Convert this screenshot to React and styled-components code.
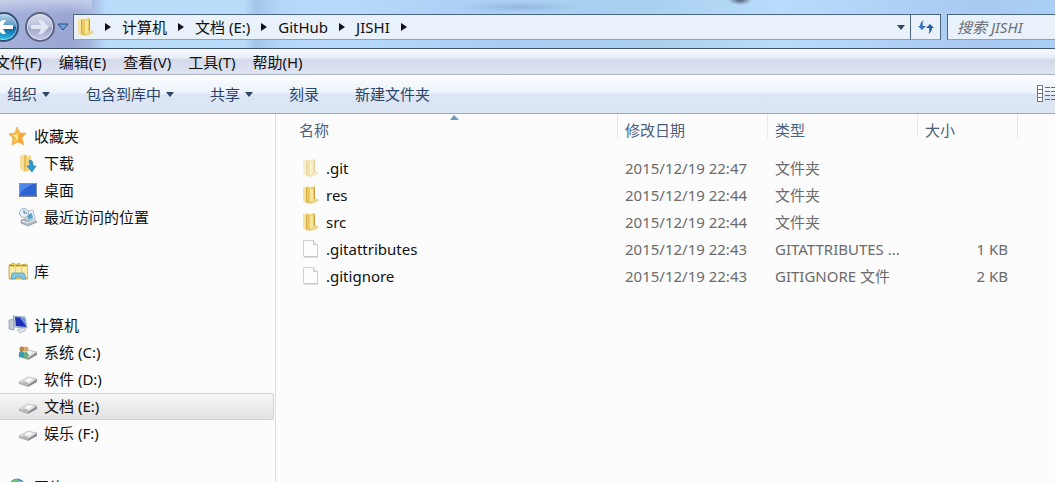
import React from 'react'
import styled, { createGlobalStyle } from 'styled-components';

const GlobalStyle = createGlobalStyle`
  * {
    box-sizing: border-box;
  }
  html, body, #root {
    height: 100%;
  }
  body {
    margin: 0;
    overflow: hidden;
  }
  body, button, input {
    font-family: "Noto Sans", "Noto Sans CJK SC", sans-serif;
    font-size: 15px;
    line-height: 20px;
  }
  button {
    border: 0;
    padding: 0;
    background: none;
    color: inherit;
    white-space: nowrap;
  }
`;

const Window = styled.div`
  height: 100%;
  display: flex;
  flex-direction: column;
  overflow: hidden;
  background: #fcfcfd;
  color: #101010;
`;

const Glass = styled.header`
  flex: none;
  display: flex;
  align-items: flex-start;
  height: 49px;
  padding-top: 14px;
  border-bottom: 1px solid #3d5570;
  background:
    radial-gradient(ellipse 12px 5px at 740px 0, #4c5c78, rgba(76, 92, 120, 0)),
    radial-gradient(ellipse 64px 5px at 520px 7px, rgba(116, 150, 190, 0.4), rgba(116, 150, 190, 0)),
    linear-gradient(180deg, rgba(220, 228, 244, 0.6) 0, rgba(220, 228, 244, 0) 14px) 0 0 / 92px 14px no-repeat,
    linear-gradient(90deg, #a6b1da 0, #9ba5d2 70px, #a4b4de 90px, #b9dcfb 106px, #b9dcfb 244px, #a3c6ea 256px, #b4d8f8 282px, #b8dafa 340px, #a9cef3 500px, #aad2ef 660px, #b9dcfb 780px, #a9c9f2 980px, #a9d0f5 100%);
`;

const NavButtons = styled.div`
  flex: none;
  display: flex;
  align-items: center;
  gap: 6px;
  height: 26px;
  margin-left: -11px;
`;

const RoundButton = styled.button`
  width: 30px;
  height: 30px;
  border-radius: 50%;
  border: 2px solid ${({ $active }) => ($active ? '#33507c' : '#5d6484')};
  display: flex;
  align-items: center;
  justify-content: center;
  background: ${({ $active }) => ($active
    ? 'linear-gradient(180deg, #b4d4ea 0, #4f93c4 48%, #0f5c99 52%, #2fc0ea 100%)'
    : 'linear-gradient(180deg, #d6daea 0, #b9c0dc 48%, #a0a8cc 52%, #c3cae4 100%)')};
  box-shadow: inset 0 0 0 1px rgba(255, 255, 255, 0.5);
  svg {
    flex: none;
  }
`;

const HistoryButton = styled.button`
  display: flex;
  margin: 0 4px 0 -4px;
`;

const AddressBar = styled.div`
  flex: 1;
  display: flex;
  align-items: center;
  height: 26px;
  padding-left: 3px;
  border: 1px solid #4c6784;
  border-bottom-color: #8aa4c0;
  background: #e9f1fb;
`;

const Crumbs = styled.nav`
  flex: 1;
  display: flex;
  align-items: center;
  gap: 11px;
`;

const Triangle = styled.span`
  border: 4px solid transparent;
  ${({ $right }) => ($right
    ? 'border-left: 6px solid #101018; border-right: 0;'
    : 'border-top: 5px solid #2c4468; border-bottom: 0;')}
`;

const DropButton = styled.button`
  display: flex;
  padding: 0 5px;
`;

const RefreshButton = styled.button`
  flex: none;
  display: flex;
  align-items: center;
  justify-content: center;
  width: 30px;
  height: 26px;
  border: 1px solid #4c6784;
  border-left: 0;
  border-bottom-color: #8aa4c0;
  background: #e9f1fb;
`;

const SearchBox = styled.input`
  flex: none;
  width: 120px;
  height: 26px;
  margin: 0 -12px 0 6px;
  padding: 0 9px;
  border: 1px solid #4c6784;
  border-bottom-color: #8aa4c0;
  border-radius: 0;
  background: #e9f1fb;
  font-style: italic;
  outline: 0;
  &::placeholder {
    color: #6b7078;
    opacity: 1;
  }
`;

const MenuBar = styled.nav`
  flex: none;
  display: flex;
  align-items: center;
  gap: 17px;
  height: 26px;
  margin-left: -5px;
  border-bottom: 1px solid #aab4c8;
  background: linear-gradient(180deg, #f8fafe 0, #e8edf8 9px, #d4daea 10px, #dfe3f2 100%);
`;

const Toolbar = styled.div`
  flex: none;
  display: flex;
  align-items: center;
  gap: 36px;
  height: 39px;
  padding-left: 7px;
  border-bottom: 1px solid #93a9c4;
  background: linear-gradient(180deg, #fbfdff 0, #edf3fc 18px, #dde6f4 19px, #dce5f4 100%);
  color: #2a4468;
`;

const ToolButton = styled.button`
  display: flex;
  align-items: center;
  gap: 5px;
`;

const ViewButton = styled.button`
  display: flex;
  margin-left: auto;
  margin-right: -8px;
`;

const Body = styled.div`
  flex: 1;
  min-height: 0;
  display: flex;
  overflow: hidden;
`;

const Sidebar = styled.aside`
  flex: none;
  width: 276px;
  padding: 9px 1px 0 0;
  border-right: 1px solid #d6dfec;
  display: flex;
  flex-direction: column;
  gap: 27px;
`;

const NavGroup = styled.ul`
  margin: 0;
  padding: 0;
  list-style: none;
`;

const NavLink = styled.a`
  display: flex;
  align-items: center;
  gap: 6px;
  height: 27px;
  padding: 0 0 2px ${({ $nested }) => ($nested ? '18px' : '8px')};
  border: 1px solid ${({ $selected }) => ($selected ? '#d4d4d4' : 'transparent')};
  border-left: 0;
  border-radius: 0 3px 3px 0;
  background: ${({ $selected }) => ($selected ? 'linear-gradient(180deg, #f6f6f6, #e2e2e2)' : 'none')};
  color: inherit;
  text-decoration: none;
  svg {
    flex: none;
  }
`;

const Content = styled.main`
  flex: 1;
  min-width: 0;
`;

const FileTable = styled.table`
  width: 100%;
  table-layout: fixed;
  border-collapse: collapse;
  color: #6b6b6b;
`;

const HeadCell = styled.th`
  width: ${({ $width }) => $width};
  height: 40px;
  padding: 0;
  vertical-align: top;
  text-align: left;
  font-weight: 400;
  color: #4c607a;
`;

const HeadLabel = styled.div`
  position: relative;
  height: 24px;
  padding: 6px 0 0 ${({ $indent }) => $indent};
  border-right: 1px solid #e3e9f1;
`;

const SortMark = styled.svg`
  position: absolute;
  top: 1px;
  left: 51%;
`;

const Cell = styled.td`
  height: 27px;
  padding: 0 10px 0 7px;
  text-align: ${({ $align }) => $align || 'left'};
  white-space: nowrap;
  overflow: hidden;
  text-overflow: ellipsis;
`;

const FileName = styled.div`
  display: flex;
  align-items: center;
  gap: 7px;
  padding-left: 19px;
  color: #101010;
`;

const FolderIcon = ({ faded }) => (
  <svg width="17" height="20" viewBox="0 0 17 20" opacity={faded ? 0.5 : 1}>
    <path d="M1 2l5-1 1 2v15l-2 1-4-3z" fill="#f6e4a4" />
    <path d="M4 3l3-1v16l-3-1z" fill="#d3a944" />
    <path d="M5 3l2-1v15l-2-1z" fill="#ecc965" />
    <path d="M7 3l5-2 1 1v15l-6 2z" fill="#ecca5c" />
    <path d="M8 4l3-1v13l-3 1z" fill="#f9e799" />
    <path d="M12 3l1-1v12l-1 1z" fill="#c79c38" />
    <path d="M10 15l4-2 3 2-2 2-6 2z" fill="#e9d590" />
  </svg>
);

const FileIcon = () => (
  <svg width="17" height="20" viewBox="0 0 17 20">
    <path d="M1.500 1.500h10l4 4v12h-14z" fill="#fdfdfd" stroke="#d2d2d2" />
    <path d="M11.500 1.500v4h4" fill="#eee" stroke="#c8c8c8" />
    <path d="M2 18h14" stroke="#bdbdbd" />
  </svg>
);

const StarIcon = () => (
  <svg width="20" height="20" viewBox="0 0 20 20">
    <path d="M9 1l3 6 6 0-4 5 2 7-6-3-6 3 1-7-4-4 6-1z" fill="#f6b83c" stroke="#e8a850" strokeWidth=".7" />
    <path d="M9 3l1 5-6 1 4 3-1 4 3-3z" fill="#fde58d" />
    <path d="M12 8l5 0-4 4 2 6-5-4z" fill="#f19c3c" opacity=".7" />
  </svg>
);

const DownloadIcon = () => (
  <svg width="20" height="20" viewBox="0 0 20 20">
    <path d="M2 3l5-2 2 2v15l-3 1-4-3z" fill="#f4dfa0" />
    <path d="M6 3l3-1v15l-3 1z" fill="#e3bb58" />
    <path d="M8 4l5-2v15l-5 2z" fill="#f1d583" />
    <path d="M12 7q3 0 3 6h3l-4 6-5-6h3q0-3-1-5z" fill="#2f9bd4" stroke="#2674ae" strokeWidth=".7" />
  </svg>
);

const DesktopIcon = () => (
  <svg width="20" height="20" viewBox="0 0 20 20">
    <rect x="1.500" y="3.500" width="17" height="12" fill="#2c62d2" stroke="#7e93b4" />
    <path d="M2 4h14q-10 3-14 10z" fill="#4f88e6" />
    <path d="M1 16h18" stroke="#50607c" strokeWidth="1.500" />
  </svg>
);

const RecentIcon = () => (
  <svg width="20" height="20" viewBox="0 0 20 20">
    <path d="M3 13l11-3 5 5-9 4-7-3z" fill="#aeb7c1" stroke="#8594a4" strokeWidth=".7" />
    <path d="M6 5l9-2 2 9-8 2z" fill="#eef6fb" stroke="#9db0c3" strokeWidth=".8" />
    <path d="M9 8l5-2 1 5-5 2z" fill="#5aa3c8" />
    <circle cx="6" cy="6" r="4.500" fill="#e6f0f8" stroke="#9fb8cc" />
    <path d="M6 3v3h3" fill="none" stroke="#55779a" />
    <path d="M4 14l6 2 7-3" fill="none" stroke="#f2f5f8" />
  </svg>
);

const LibraryIcon = () => (
  <svg width="20" height="20" viewBox="0 0 20 20">
    <path d="M1 4l5-2 2 2 3-2 2 2 5-1 2 2v13H1z" fill="#edcf6a" stroke="#b79a3e" strokeWidth=".7" />
    <path d="M2 6h5v10H2zM8 6h5v10H8zM14 6h5v10h-5z" fill="#faeea9" />
    <path d="M2 4.500h4M8 4.500h4M14 4.500h4" stroke="#70963f" />
    <path d="M3 18l1-6h12l2 6h-4l-1-2H8l-1 2z" fill="#82c5e4" stroke="#4f93b9" strokeWidth=".7" />
  </svg>
);

const ComputerIcon = () => (
  <svg width="20" height="20" viewBox="0 0 20 20">
    <path d="M1 5l5-1v11l-5-1z" fill="#c3c9d4" stroke="#8a92a4" strokeWidth=".7" />
    <path d="M5 1l12 1 2 11-12-1z" fill="#bccde2" stroke="#7d8fae" strokeWidth=".7" />
    <path d="M7 2l9 1 2 9-10-1z" fill="#1a2fb4" />
    <path d="M12 3l4 0 2 8z" fill="#6f93ea" />
    <path d="M9 15l6-2 3 2-6 3z" fill="#dfe3ea" stroke="#a6aebc" strokeWidth=".7" />
  </svg>
);

const DriveShape = () => (
  <>
    <path d="M1 13l9-5 9 2-9 6z" fill="#dfe0e2" stroke="#b4b6ba" strokeWidth=".7" />
    <path d="M1 13l9 3v2l-9-3z" fill="#b0b2b6" />
    <path d="M10 16l9-6v3l-9 5z" fill="#8a8c90" />
    <path d="M7 11l4-2 4 1-4 3z" fill="#f8f8f8" />
    <path d="M5 13l5 2" stroke="#9a9ca0" />
  </>
);

const DriveIcon = () => (
  <svg width="20" height="20" viewBox="0 0 20 20"><DriveShape /></svg>
);

const SystemDriveIcon = () => (
  <svg width="20" height="20" viewBox="0 0 20 20">
    <DriveShape />
    <circle cx="4" cy="7" r="2.500" fill="#b88547" />
    <circle cx="8" cy="7" r="2.500" fill="#d8a669" />
    <path d="M1 15q-1-7 3-6l3 2v5z" fill="#3f9cb0" />
    <path d="M6 16q-1-7 3-6l2 3-2 4z" fill="#6ab07e" />
  </svg>
);

const NetworkIcon = () => (
  <svg width="20" height="20" viewBox="0 0 20 20">
    <circle cx="9" cy="10" r="8" fill="#3a8fc9" stroke="#2c6fa0" strokeWidth=".7" />
    <path d="M3 5q4-5 8-2l-2 5-5 2z" fill="#6dc07a" />
    <path d="M11 4l4 1 1 4-4 1z" fill="#c7e4f5" />
  </svg>
);

const RefreshIcon = () => (
  <svg width="18" height="18" viewBox="0 0 18 18">
    <path d="M7 2q-2 2-1 6h3l-4 4-4-4h2q0-4 4-6z" fill="#3577c4" />
    <path d="M11 16q2-2 1-6H9l4-4 4 4h-2q0 4-4 6z" fill="#2a5fa8" />
  </svg>
);

const ViewIcon = () => (
  <svg width="26" height="18" viewBox="0 0 26 18" shapeRendering="crispEdges">
    <rect x="0.500" y="0.500" width="5" height="16" fill="#fff" stroke="#6f7886" />
    <path d="M1 4.500h5M1 8.500h5M1 12.500h5" stroke="#6f7886" />
    <path d="M8 2.500h18M8 6.500h18M8 10.500h18M8 14.500h18" stroke="#5f6b7d" strokeDasharray="5 1" />
  </svg>
);

const RoundArrow = ({ flip }) => (
  <svg width="20" height="18" viewBox="0 0 20 18">
    <path
      d="M1 7h10L8 2h4l7 7-7 7H8l3-5H1z"
      fill={flip ? '#fff' : '#e2e6f3'}
      transform={flip ? 'rotate(180 10 9)' : undefined}
    />
  </svg>
);

const crumbs = ['计算机', '文档 (E:)', 'GitHub', 'JISHI'];

const menus = ['文件(F)', '编辑(E)', '查看(V)', '工具(T)', '帮助(H)'];

const tools = [
  { label: '组织', menu: true },
  { label: '包含到库中', menu: true },
  { label: '共享', menu: true },
  { label: '刻录' },
  { label: '新建文件夹' },
];

const places = [
  [
    { label: '收藏夹', Icon: StarIcon },
    { label: '下载', Icon: DownloadIcon, nested: true },
    { label: '桌面', Icon: DesktopIcon, nested: true },
    { label: '最近访问的位置', Icon: RecentIcon, nested: true },
  ],
  [{ label: '库', Icon: LibraryIcon }],
  [
    { label: '计算机', Icon: ComputerIcon },
    { label: '系统 (C:)', Icon: SystemDriveIcon, nested: true },
    { label: '软件 (D:)', Icon: DriveIcon, nested: true },
    { label: '文档 (E:)', Icon: DriveIcon, nested: true, selected: true },
    { label: '娱乐 (F:)', Icon: DriveIcon, nested: true },
  ],
  [{ label: '网络', Icon: NetworkIcon }],
];

const files = [
  { name: '.git', date: '2015/12/19 22:47', type: '文件夹', folder: true, hidden: true },
  { name: 'res', date: '2015/12/19 22:44', type: '文件夹', folder: true },
  { name: 'src', date: '2015/12/19 22:44', type: '文件夹', folder: true },
  { name: '.gitattributes', date: '2015/12/19 22:43', type: 'GITATTRIBUTES ...', size: '1 KB' },
  { name: '.gitignore', date: '2015/12/19 22:43', type: 'GITIGNORE 文件', size: '2 KB' },
];

const AddressRow = () => (
  <Glass>
    <NavButtons>
      <RoundButton $active aria-label="后退"><RoundArrow flip /></RoundButton>
      <RoundButton aria-label="前进"><RoundArrow /></RoundButton>
      <HistoryButton aria-label="历史">
        <svg width="12" height="8" viewBox="0 0 12 8">
          <path d="M1 1h10L6 7z" fill="#6fa3dc" stroke="#25508c" />
        </svg>
      </HistoryButton>
    </NavButtons>
    <AddressBar>
      <Crumbs>
        <FolderIcon />
        <Triangle $right />
        {crumbs.map((crumb) => (
          <React.Fragment key={crumb}>
            <button>{crumb}</button>
            <Triangle $right />
          </React.Fragment>
        ))}
      </Crumbs>
      <DropButton aria-label="以前的位置"><Triangle /></DropButton>
    </AddressBar>
    <RefreshButton aria-label="刷新"><RefreshIcon /></RefreshButton>
    <SearchBox type="text" placeholder="搜索 JISHI" aria-label="搜索" />
  </Glass>
);

const FileList = () => (
  <Content>
    <FileTable>
      <thead>
        <tr>
          <HeadCell $width="342px">
            <HeadLabel $indent="23px">
              名称
              <SortMark width="9" height="5" viewBox="0 0 9 5">
                <path d="M0 5l4-5 5 5z" fill="#6d9cc0" />
              </SortMark>
            </HeadLabel>
          </HeadCell>
          <HeadCell $width="150px"><HeadLabel $indent="7px">修改日期</HeadLabel></HeadCell>
          <HeadCell $width="150px"><HeadLabel $indent="7px">类型</HeadLabel></HeadCell>
          <HeadCell $width="100px"><HeadLabel $indent="7px">大小</HeadLabel></HeadCell>
          <HeadCell />
        </tr>
      </thead>
      <tbody>
        {files.map((file) => (
          <tr key={file.name}>
            <Cell>
              <FileName>
                {file.folder ? <FolderIcon faded={file.hidden} /> : <FileIcon />}
                {file.name}
              </FileName>
            </Cell>
            <Cell>{file.date}</Cell>
            <Cell>{file.type}</Cell>
            <Cell $align="right">{file.size}</Cell>
            <Cell />
          </tr>
        ))}
      </tbody>
    </FileTable>
  </Content>
);

const App = () => {
  return (
    <Window>
      <GlobalStyle />
      <AddressRow />
      <MenuBar>
        {menus.map((menu) => <button key={menu}>{menu}</button>)}
      </MenuBar>
      <Toolbar>
        {tools.map((tool) => (
          <ToolButton key={tool.label}>
            {tool.label}
            {tool.menu && <Triangle />}
          </ToolButton>
        ))}
        <ViewButton aria-label="更改视图"><ViewIcon /></ViewButton>
      </Toolbar>
      <Body>
        <Sidebar>
          {places.map((group) => (
            <NavGroup key={group[0].label}>
              {group.map(({ label, Icon, nested, selected }) => (
                <li key={label}>
                  <NavLink href="#" $nested={nested} $selected={selected}>
                    <Icon />
                    {label}
                  </NavLink>
                </li>
              ))}
            </NavGroup>
          ))}
        </Sidebar>
        <FileList />
      </Body>
    </Window>
  )
}

export default App
